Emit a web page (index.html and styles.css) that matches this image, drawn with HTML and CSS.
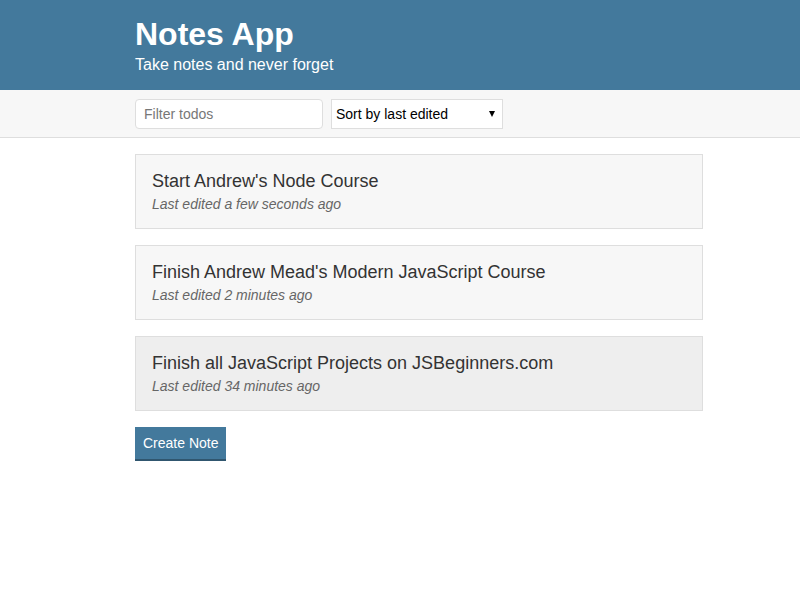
FILE: index.html
```html
<!DOCTYPE html>
<html lang="en">
<head>
<meta charset="utf-8">
<title>Notes App</title>
<link rel="stylesheet" href="styles.css">
</head>
<body>
<header class="header">
  <div class="container">
    <h1 class="header__title">Notes App</h1>
    <h2 class="header__subtitle">Take notes and never forget</h2>
  </div>
</header>
<div class="actions">
  <div class="container actions__row">
    <input class="input" type="text" placeholder="Filter todos">
    <div class="dropdown">
      <select class="dropdown__select">
        <option>Sort by last edited</option>
        <option>Sort by recently created</option>
        <option>Sort alphabetically</option>
      </select>
    </div>
  </div>
</div>
<main class="container notes">
  <a class="list-item" href="#">
    <p class="list-item__title">Start Andrew's Node Course</p>
    <p class="list-item__subtitle">Last edited a few seconds ago</p>
  </a>
  <a class="list-item" href="#">
    <p class="list-item__title">Finish Andrew Mead's Modern JavaScript Course</p>
    <p class="list-item__subtitle">Last edited 2 minutes ago</p>
  </a>
  <a class="list-item list-item--hover" href="#">
    <p class="list-item__title">Finish all JavaScript Projects on JSBeginners.com</p>
    <p class="list-item__subtitle">Last edited 34 minutes ago</p>
  </a>
  <div class="create-row">
    <button class="button">Create Note</button>
  </div>
</main>
</body>
</html>
```
FILE: styles.css
```css
* { box-sizing: border-box; }
html, body { margin: 0; padding: 0; }
body {
  font-family: "Liberation Sans", Arial, sans-serif;
  color: #333;
  background: #fff;
}
.container {
  width: 568px;
  margin-left: 135px;
}
.header {
  background: #43799c;
  color: #fff;
  padding: 14px 0 15px;
  height: 90px;
}
.header__title {
  margin: 0;
  font-size: 32px;
  line-height: 40px;
  font-weight: bold;
}
.header__subtitle {
  margin: 1px 0 0;
  font-size: 16px;
  line-height: 20px;
  font-weight: normal;
}
.actions {
  background: #f7f7f7;
  border-bottom: 1px solid #dedede;
  padding: 9px 0 8px;
}
.actions__row {
  display: flex;
  gap: 8px;
}
.input {
  width: 188px;
  height: 30px;
  border: 1px solid #dedede;
  border-radius: 4px;
  padding: 0 8px;
  font-family: inherit;
  font-size: 14px;
  color: #333;
  background: #fff;
  outline: none;
}
.input::placeholder { color: #777; }
.dropdown {
  position: relative;
  width: 172px;
  height: 30px;
}
.dropdown__select {
  -webkit-appearance: none;
  appearance: none;
  width: 100%;
  height: 30px;
  border: 1px solid #dedede;
  border-radius: 0;
  background: #fff;
  padding: 0 4px;
  font-family: inherit;
  font-size: 14px;
  color: #000;
  outline: none;
}
.dropdown::after {
  content: "";
  position: absolute;
  right: 8px;
  top: 12px;
  border-left: 3.5px solid transparent;
  border-right: 3.5px solid transparent;
  border-top: 6px solid #000;
  pointer-events: none;
}
.notes {
  padding-top: 16px;
  display: flex;
  flex-direction: column;
  gap: 16px;
}
.list-item {
  display: block;
  text-decoration: none;
  color: #333;
  background: #f7f7f7;
  border: 1px solid #dedede;
  padding: 15px 16px 14px;
}
.list-item--hover { background: #eeeeee; }
.list-item__title {
  margin: 0;
  font-size: 18px;
  line-height: 22px;
}
.list-item__subtitle {
  margin: 3px 0 0;
  font-size: 14px;
  line-height: 19px;
  font-style: italic;
  color: #666;
}
.create-row { display: flex; }
.button {
  background: #43799c;
  color: #fff;
  border: none;
  border-bottom: 2px solid #30566f;
  padding: 8px 8px;
  font-family: inherit;
  font-size: 14px;
  line-height: 16px;
  cursor: pointer;
}
```
